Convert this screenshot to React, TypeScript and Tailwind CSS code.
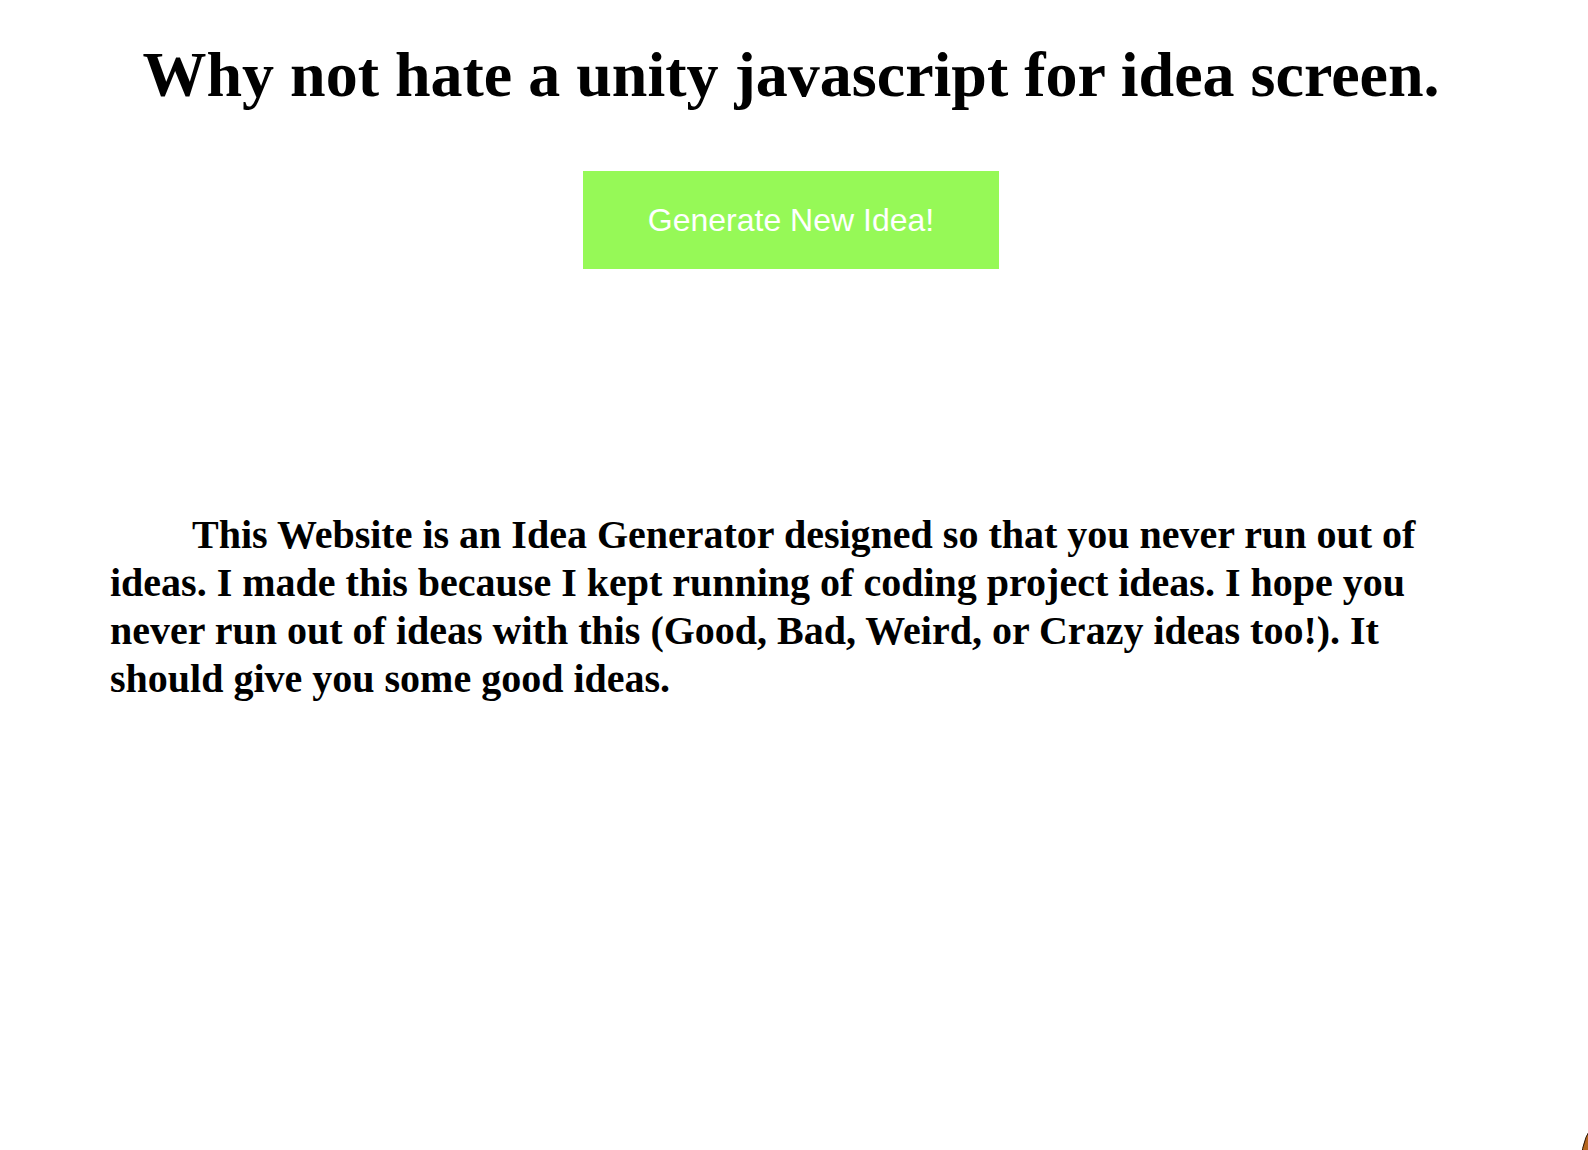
import React, { useState } from "react";

const ideas = [
  "Why not hate a unity javascript for idea screen.",
  "Why not build a python chatbot for weather app.",
  "Why not make a react game for todo list.",
];

export default function App() {
  const [idea, setIdea] = useState(0);

  return (
    <div className="relative min-h-[1150px] w-full overflow-hidden bg-white text-black">
      <div className="flex w-[1582px] flex-col items-center">
        <h1
          className="mt-[43px] text-center text-[64px] font-bold leading-none"
          style={{ fontFamily: '"Liberation Serif", "Times New Roman", serif' }}
        >
          {ideas[idea]}
        </h1>

        <button
          type="button"
          onClick={() => setIdea((idea + 1) % ideas.length)}
          className="mt-[64px] h-[98px] w-[416px] bg-[#96f957] text-[32px] text-white"
          style={{ fontFamily: '"Liberation Sans", Arial, sans-serif' }}
        >
          Generate New Idea!
        </button>

        <p
          className="mt-[242px] w-full px-[110px] indent-[82px] text-[40px] font-bold leading-[48px]"
          style={{ fontFamily: '"Liberation Serif", "Times New Roman", serif' }}
        >
          This Website is an Idea Generator designed so that you never run out of ideas. I made this
          because I kept running of coding project ideas. I hope you never run out of ideas with this
          (Good, Bad, Weird, or Crazy ideas too!). It should give you some good ideas.
        </p>
      </div>

      <div className="absolute bottom-[-70px] right-[-113px] h-[120px] w-[120px] rounded-full border border-[#2a1608] bg-[#b5651d]" />
    </div>
  );
}
